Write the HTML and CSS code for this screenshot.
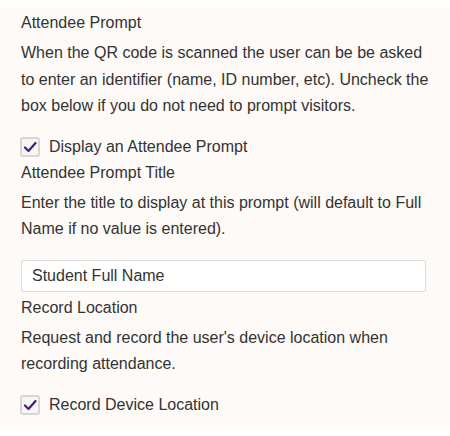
FILE: index.html
```html
<!DOCTYPE html>
<html>
<head>
<meta charset="utf-8">
<link rel="stylesheet" href="styles.css">
</head>
<body>
<div class="panel">
  <div class="title">Attendee Prompt</div>
  <p class="desc">When the QR code is scanned the user can be be asked to enter an identifier (name, ID number, etc). Uncheck the box below if you do not need to prompt visitors.</p>
  <label class="check">
    <span class="box"><svg width="14" height="14" viewBox="0 0 14 14"><path d="M2 7.5 L5.5 11 L12.5 3" fill="none" stroke="#4a1a7c" stroke-width="2.2" stroke-linecap="round" stroke-linejoin="round"/></svg></span>
    <span class="check-label">Display an Attendee Prompt</span>
  </label>
  <div class="title">Attendee Prompt Title</div>
  <p class="desc">Enter the title to display at this prompt (will default to Full Name if no value is entered).</p>
  <div class="input">Student Full Name</div>
  <div class="title title-tight">Record Location</div>
  <p class="desc">Request and record the user's device location when recording attendance.</p>
  <label class="check">
    <span class="box"><svg width="14" height="14" viewBox="0 0 14 14"><path d="M2 7.5 L5.5 11 L12.5 3" fill="none" stroke="#4a1a7c" stroke-width="2.2" stroke-linecap="round" stroke-linejoin="round"/></svg></span>
    <span class="check-label">Record Device Location</span>
  </label>
</div>
</body>
</html>
```

FILE: styles.css
```css
html, body {
  margin: 0;
  padding: 0;
  background: #ffffff;
}
body {
  padding-top: 8px;
  font-family: "Liberation Sans", sans-serif;
  font-size: 16px;
  color: #333333;
}
.panel {
  background: #fdfaf7;
  padding: 2px 15px 9px 21px;
}
.title {
  line-height: 26px;
}
.title-tight {
  margin-top: 3px;
}
.desc {
  margin: 4px 0 0 0;
  line-height: 26.5px;
  width: 412px;
}
.check {
  display: flex;
  align-items: center;
  gap: 9px;
  height: 26px;
  margin-top: 14px;
  margin-left: -1px;
}
.box {
  width: 16px;
  height: 16px;
  border: 2px solid #d6d6d6;
  border-radius: 3px;
  background: #f7f6f5;
  display: flex;
  align-items: center;
  justify-content: center;
}
.check-label {
  line-height: 26px;
}
.input {
  margin-top: 17px;
  width: 405px;
  height: 32px;
  box-sizing: border-box;
  border: 1px solid #dcdcdc;
  border-radius: 2px;
  background: #ffffff;
  padding: 0 10px;
  display: flex;
  align-items: center;
}
```
